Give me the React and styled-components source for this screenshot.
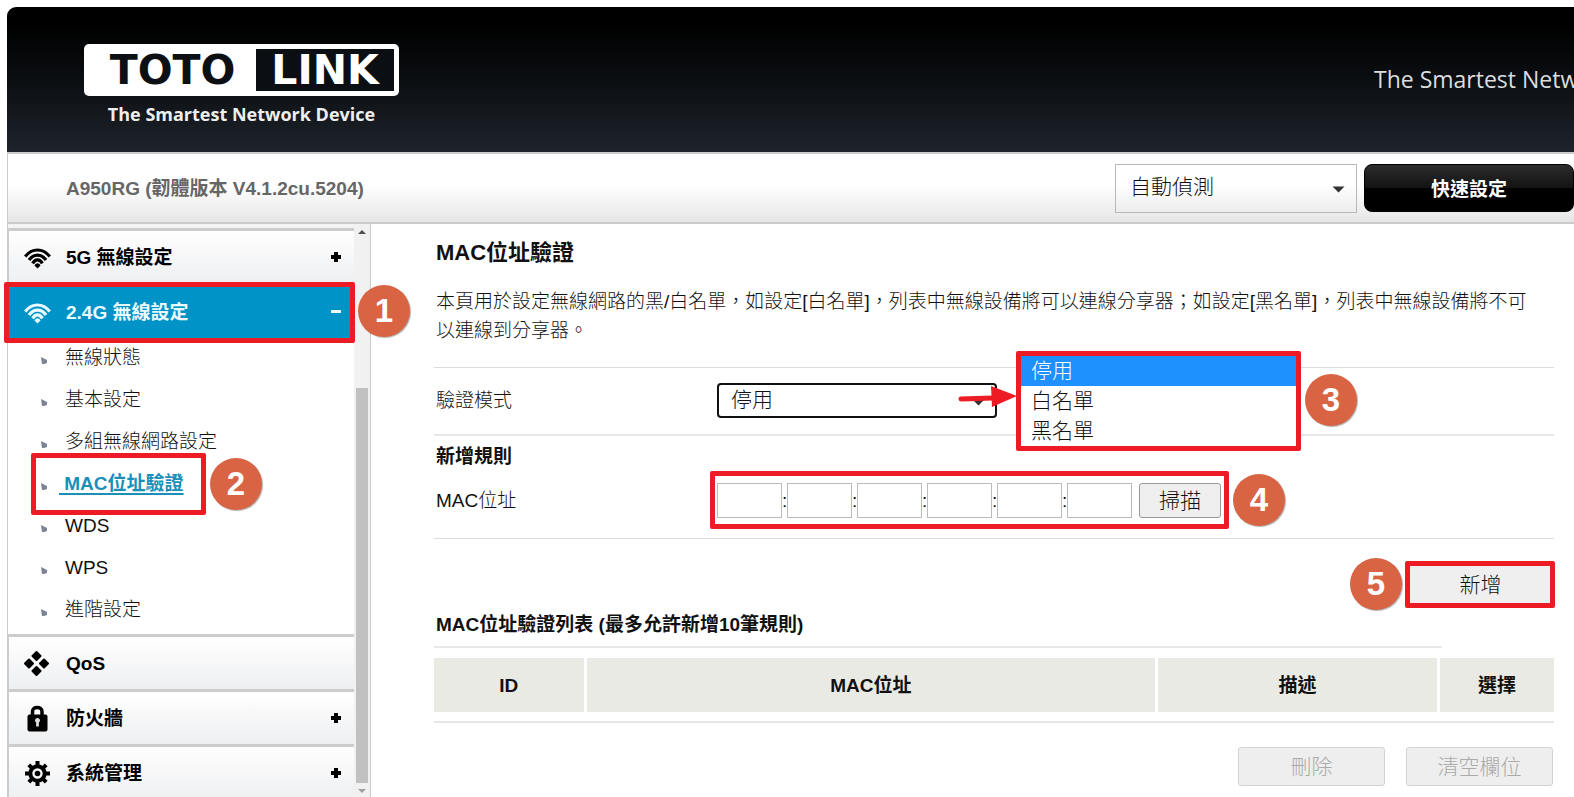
import React from 'react';
import styled, { createGlobalStyle, css } from 'styled-components';

const GlobalStyle = createGlobalStyle`
  * {
    box-sizing: border-box;
  }
  body {
    margin: 0;
    background: #fff;
    color: #111;
    font-family: "Liberation Sans", "Noto Sans CJK TC", sans-serif;
    font-size: 19px;
    font-weight: 300;
    line-height: 29px;
    overflow: hidden;
  }
  button, input, select {
    font-family: inherit;
    font-weight: inherit;
    color: inherit;
  }
`;

const Page = styled.div`
  height: 100vh;
  padding: 7px 0 0 7px;
  display: flex;
  flex-direction: column;
`;

const Header = styled.header`
  height: 145px;
  flex: none;
  display: flex;
  align-items: flex-start;
  justify-content: space-between;
  padding: 37px 0 0 77px;
  border-radius: 9px 0 0 0;
  background: linear-gradient(#000 12%, #0b0e11 50%, #1e242c);
  overflow: hidden;
`;

const Brand = styled.div`
  width: 315px;
  color: #fff;
`;

const Logo = styled.div`
  display: flex;
  height: 52px;
  padding: 5px;
  border-radius: 5px;
  background: #fff;
  font-family: "DejaVu Sans", sans-serif;
  font-size: 41px;
  font-weight: 700;
  line-height: 42px;
  text-align: center;
`;

const LogoLeft = styled.span`
  flex: 1;
  color: #0c0f13;
`;

const LogoRight = styled.span`
  width: 138px;
  background: #0b0e12;
`;

const Tagline = styled.div`
  margin-top: 4px;
  font-family: "Open Sans", "Noto Sans", sans-serif;
  font-size: 18px;
  font-weight: 700;
  text-align: center;
  color: #eee;
`;

const Slogan = styled.div`
  width: 200px;
  margin-top: 21px;
  font-family: "Open Sans", "Noto Sans", sans-serif;
  font-size: 23px;
  font-weight: 400;
  white-space: nowrap;
  color: #ddd;
`;

const TopBar = styled.div`
  height: 72px;
  flex: none;
  display: flex;
  align-items: center;
  gap: 7px;
  padding-left: 58px;
  border: solid #ccc;
  border-width: 2px 0 2px 1px;
  background: linear-gradient(#fff 45%, #e6e6e6);
`;

const Version = styled.div`
  flex: 1;
  font-weight: 700;
  color: #666;
`;

const SelectWrap = styled.div`
  position: relative;
  display: flex;
  width: ${(p) => p.$width};
`;

const Select = styled.select`
  appearance: none;
  width: 100%;
  height: 49px;
  padding: 0 40px 4px 14px;
  border: 1px solid #b8b8b8;
  border-radius: 0;
  outline: none;
  background: transparent;
  font-size: 21px;
  ${(p) => p.$focused && css`
    height: 35px;
    padding: 0 40px 2px 12px;
    border: 2px solid #111;
    border-radius: 4px;
  `}
`;

const Caret = styled.svg`
  position: absolute;
  right: 12px;
  top: 50%;
  width: 13px;
  height: 7px;
  margin-top: -2px;
  pointer-events: none;
`;

const QuickButton = styled.button`
  width: 210px;
  height: 48px;
  padding: 0 0 2px;
  border: 1px solid #000;
  border-radius: 8px;
  background: linear-gradient(#2c2c2c, #131313 50%, #000 50%);
  color: #fff;
  font-size: 19px;
  font-weight: 700;
`;

const Body = styled.div`
  flex: 1;
  min-height: 0;
  display: flex;
`;

const Sidebar = styled.aside`
  width: 364px;
  flex: none;
  display: flex;
  border: solid #ccc;
  border-width: 0 1px;
`;

const Nav = styled.nav`
  flex: 1;
  padding-top: 4px;
  background: #f3f3f3;
`;

const MenuItem = styled.a`
  position: relative;
  display: flex;
  align-items: center;
  gap: 15px;
  height: 55px;
  padding: 0 13px 0 15px;
  border-top: 3px solid #ccc;
  border-left: 1px solid #ccc;
  background: ${(p) => (p.$active ? '#0093c7' : 'linear-gradient(#fff, #eeeff1)')};
  color: ${(p) => (p.$active ? '#e8fbff' : '#000')};
  font-weight: 700;
  text-decoration: none;
`;

const MenuLabel = styled.span`
  flex: 1;
`;

const MenuIcon = styled.svg`
  width: 27px;
  height: 27px;
  flex: none;
`;

const Toggle = styled.svg`
  width: 10px;
  height: 10px;
`;

const SubMenu = styled.ul`
  list-style: none;
  margin: 0;
  padding: 0 0 2px;
  background: #fff;
`;

const SubItem = styled.li`
  position: relative;
  display: flex;
  align-items: center;
  gap: 12px;
  height: 42px;
  padding: 0 0 4px 33px;
`;

const Bullet = styled.svg`
  width: 6px;
  height: 7px;
  margin-top: 6px;
`;

const SubLink = styled.a`
  padding-left: 6px;
  white-space: pre;
  color: ${(p) => (p.$current ? '#1a8fb8' : '#111')};
  font-weight: ${(p) => (p.$current ? 700 : 300)};
  text-decoration: ${(p) => (p.$current ? 'underline' : 'none')};
  text-decoration-thickness: 2px;
  text-underline-offset: 3px;
  ${(p) => p.$current && 'padding-left: 0;'}
`;

const Scrollbar = styled.div`
  width: 16px;
  display: flex;
  flex-direction: column;
  align-items: center;
  justify-content: space-between;
  padding: 6px 0 4px;
  background: #f1f1f1;
`;

const Thumb = styled.div`
  flex: 1;
  width: 12px;
  margin: 154px 0 6px;
  background: #c1c1c1;
`;

const ScrollArrow = styled.svg`
  width: 8px;
  height: 4px;
`;

const Content = styled.main`
  flex: 1;
  min-width: 0;
  padding: 14px 20px 0 63px;
`;

const Title = styled.h1`
  margin: 0 2px;
  font-size: 22px;
  line-height: 30px;
`;

const Description = styled.p`
  margin: 0;
  padding: 19px 18px 22px 2px;
  border-bottom: 1px solid #ddd;
`;

const Row = styled.div`
  display: flex;
  align-items: center;
  padding: ${(p) => p.$padding};
  border-bottom: ${(p) => p.$line || '1px solid #ddd'};
`;

const RowLabel = styled.label`
  flex: 0 0 283px;
  padding-left: 2px;
`;

const SectionTitle = styled.h2`
  margin: 0;
  padding: 6px 2px 0;
  font-size: 19px;
  line-height: 29px;
`;

const ListTitle = styled(SectionTitle)`
  width: 90%;
  padding: 4px 2px 7px;
  border-bottom: 2px solid #e8e8e8;
`;

const MacFields = styled.div`
  position: relative;
  display: flex;
  align-items: center;
`;

const Octet = styled.input`
  width: 65px;
  height: 35px;
  border: 1px solid #bbb;
  text-align: center;
`;

const Colon = styled.span`
  width: 5px;
`;

const Button = styled.button`
  width: ${(p) => p.$width || '147px'};
  height: ${(p) => p.$height || '39px'};
  padding: 0 0 4px;
  border: 1px solid #999;
  border-radius: 3px;
  background: #efefef;
  color: #111;
  font-size: 21px;
  &:disabled {
    border-color: #d4d4d4;
    background: #eee;
    color: #aaa;
  }
`;

const ScanButton = styled(Button)`
  margin-left: 7px;
`;

const Actions = styled.div`
  display: flex;
  justify-content: flex-end;
  gap: 21px;
  padding: ${(p) => p.$padding};
`;

const AddWrap = styled.div`
  position: relative;
  display: flex;
`;

const Table = styled.table`
  width: 100%;
  margin-top: 10px;
  border-collapse: collapse;
  table-layout: fixed;
  th {
    height: 54px;
    padding: 0;
    background: #e9eae4;
  }
  th + th {
    border-left: 3px solid #fff;
  }
`;

const TableEnd = styled.div`
  margin-top: 9px;
  border-bottom: 2px solid #e6e6e6;
`;

// red frame drawn over the parent, $inset is top right bottom left
const Frame = styled.div`
  position: absolute;
  inset: ${(p) => p.$inset};
  z-index: 2;
  border: 5px solid #ed1c24;
  border-radius: 2px;
  pointer-events: none;
`;

const Badge = styled.div`
  position: absolute;
  top: 50%;
  left: calc(100% + 4px);
  z-index: 3;
  width: 52px;
  height: 52px;
  margin-top: -27px;
  border-radius: 50%;
  background: #d96444;
  box-shadow: 1px 1px 1px rgba(0, 0, 0, 0.3);
  color: #fff;
  font-size: 33px;
  font-weight: 700;
  line-height: 52px;
  text-align: center;
`;

const SubBadge = styled(Badge)`
  left: 202px;
`;

const FieldBadge = styled(Badge)`
  left: calc(100% + 12px);
`;

const OptionBadge = styled(Badge)`
  left: calc(100% + 9px);
`;

const AddBadge = styled(Badge)`
  left: auto;
  right: calc(100% + 5px);
`;

const Options = styled.ul`
  position: absolute;
  top: -32px;
  left: 299px;
  z-index: 2;
  width: 285px;
  margin: 0;
  padding: 0;
  list-style: none;
  border: 5px solid #ed1c24;
  border-radius: 2px;
  background: #fff;
  font-size: 21px;
`;

const Option = styled.li`
  height: 30px;
  padding-left: 10px;
  line-height: 29px;
  background: ${(p) => (p.$selected ? '#1e90ff' : '#fff')};
  color: ${(p) => (p.$selected ? '#fff' : '#111')};
`;

const Arrow = styled.svg`
  position: absolute;
  top: 2px;
  left: 240px;
  z-index: 3;
  width: 60px;
  height: 24px;
`;

const WifiIcon = () => (
  <MenuIcon viewBox="0 0 27 27" fill="none" stroke="currentColor" strokeWidth="3.200">
    <path d="M1.200 12.500C8 3.800 19 3.800 25.800 12.500" />
    <path d="M5 16C9.500 9.400 17.500 9.400 22 16" />
    <path d="M8.600 19.400C11.300 14.800 15.700 14.800 18.400 19.400" />
    <path d="M10.500 21.500C12 18.600 15 18.600 16.500 21.500L13.500 24.500Z" fill="currentColor" stroke="none" />
  </MenuIcon>
);

const QosIcon = () => (
  <MenuIcon viewBox="0 0 27 27" fill="currentColor" stroke="currentColor" strokeWidth="2" strokeLinejoin="round">
    <path d="M12.500 2L16.500 6L12.500 10L8.500 6ZM12.500 17L16.500 21L12.500 25L8.500 21ZM5 9.500L9 13.500L5 17.500L1 13.500ZM20 9.500L24 13.500L20 17.500L16 13.500Z" />
  </MenuIcon>
);

const LockIcon = () => (
  <MenuIcon viewBox="0 0 27 27">
    <path d="M8.500 12V6.500C8.500 1.200 18 1.200 18 6.500V12" fill="none" stroke="currentColor" strokeWidth="3.500" />
    <rect x="3.500" y="9.500" width="20" height="17" rx="2" fill="currentColor" />
    <path d="M13.500 13a2.500 2.500 0 0 1 1.400 4.600V21.500h-2.800V17.600a2.500 2.500 0 0 1 1.400-4.600z" fill="#ddd" />
  </MenuIcon>
);

const GearIcon = () => (
  <MenuIcon viewBox="0 0 27 27" stroke="currentColor" fill="none">
    <path
      d="M13.500 1V26M1 13.500H26M4.800 4.800L22.200 22.200M22.200 4.800L4.800 22.200"
      strokeWidth="4"
    />
    <circle cx="13.500" cy="13.500" r="7.200" fill="#f6f7f8" strokeWidth="4" />
    <circle cx="13.500" cy="13.500" r="2.800" fill="currentColor" stroke="none" />
  </MenuIcon>
);

const Plus = () => (
  <Toggle viewBox="0 0 10 10" stroke="currentColor" strokeWidth="4">
    <path d="M5 0V10M0 5H10" />
  </Toggle>
);

const Minus = () => (
  <Toggle viewBox="0 0 10 10" stroke="currentColor" strokeWidth="3">
    <path d="M0 4.500H10" />
  </Toggle>
);

const CaretDown = () => (
  <Caret viewBox="0 0 13 7">
    <path d="M.5 .5H12.500L6.500 6.500Z" fill="#333" />
  </Caret>
);

const subItems = ['無線狀態', '基本設定', '多組無線網路設定', 'MAC位址驗證', 'WDS', 'WPS', '進階設定'];

const SideMenu = () => (
  <Sidebar>
    <Nav>
      <MenuItem href="#wireless-5g">
        <WifiIcon />
        <MenuLabel>5G 無線設定</MenuLabel>
        <Plus />
      </MenuItem>
      <MenuItem href="#wireless-24g" $active>
        <WifiIcon />
        <MenuLabel>2.4G 無線設定</MenuLabel>
        <Minus />
        <Frame $inset="-4px -1px -5px -5px" />
        <Badge>1</Badge>
      </MenuItem>
      <SubMenu>
        {subItems.map((name) => {
          const current = name === 'MAC位址驗證';
          return (
            <SubItem key={name}>
              <Bullet viewBox="0 0 6 7">
                <path d="M0 0L6 3V6L3 7H1Z" fill="#7d8294" />
              </Bullet>
              <SubLink href="#" $current={current}>{current ? ` ${name}` : name}</SubLink>
              {current && <Frame $inset="-11px 148px -9px 23px" />}
              {current && <SubBadge>2</SubBadge>}
            </SubItem>
          );
        })}
      </SubMenu>
      <MenuItem href="#qos">
        <QosIcon />
        <MenuLabel>QoS</MenuLabel>
      </MenuItem>
      <MenuItem href="#firewall">
        <LockIcon />
        <MenuLabel>防火牆</MenuLabel>
        <Plus />
      </MenuItem>
      <MenuItem href="#system">
        <GearIcon />
        <MenuLabel>系統管理</MenuLabel>
        <Plus />
      </MenuItem>
    </Nav>
    <Scrollbar>
      <ScrollArrow viewBox="0 0 8 4"><path d="M0 4L4 0L8 4Z" fill="#505050" /></ScrollArrow>
      <Thumb />
      <ScrollArrow viewBox="0 0 8 4"><path d="M0 0L4 4L8 0Z" fill="#a0a0a0" /></ScrollArrow>
    </Scrollbar>
  </Sidebar>
);

const octets = [1, 2, 3, 4, 5, 6];

const App = () => (
  <Page>
    <GlobalStyle />
    <Header>
      <Brand>
        <Logo>
          <LogoLeft>TOTO</LogoLeft>
          <LogoRight>LINK</LogoRight>
        </Logo>
        <Tagline>The Smartest Network Device</Tagline>
      </Brand>
      <Slogan>The Smartest Network Device</Slogan>
    </Header>
    <TopBar>
      <Version>A950RG (韌體版本 V4.1.2cu.5204)</Version>
      <SelectWrap $width="242px">
        <Select aria-label="語言" defaultValue="auto">
          <option value="auto">自動偵測</option>
        </Select>
        <CaretDown />
      </SelectWrap>
      <QuickButton type="button">快速設定</QuickButton>
    </TopBar>
    <Body>
      <SideMenu />
      <Content>
        <Title>MAC位址驗證</Title>
        <Description>
          本頁用於設定無線網路的黑/白名單，如設定[白名單]，列表中無線設備將可以連線分享器；如設定[黑名單]，列表中無線設備將不可以連線到分享器。
        </Description>
        <Row $padding="15px 0 16px" $line="2px solid #e8e8e8">
          <RowLabel htmlFor="mode">驗證模式</RowLabel>
          <SelectWrap $width="280px">
            <Select id="mode" defaultValue="off" $focused>
              <option value="off">停用</option>
              <option value="allow">白名單</option>
              <option value="deny">黑名單</option>
            </Select>
            <CaretDown />
            <Arrow viewBox="0 0 60 24">
              <path d="M4 14L36 13" stroke="#ed1c24" strokeWidth="5" strokeLinecap="round" />
              <path d="M34 1L60 11L35 22Z" fill="#ed1c24" />
            </Arrow>
            <Options>
              <Option $selected>停用</Option>
              <Option>白名單</Option>
              <Option>黑名單</Option>
              <OptionBadge as="li">3</OptionBadge>
            </Options>
          </SelectWrap>
        </Row>
        <SectionTitle>新增規則</SectionTitle>
        <Row $padding="12px 0 20px">
          <RowLabel htmlFor="mac-1">MAC位址</RowLabel>
          <MacFields>
            {octets.map((n) => (
              <React.Fragment key={n}>
                {n > 1 && <Colon>:</Colon>}
                <Octet id={`mac-${n}`} aria-label={`MAC位址 ${n}`} maxLength={2} />
              </React.Fragment>
            ))}
            <ScanButton type="button" $width="82px" $height="35px">掃描</ScanButton>
            <Frame $inset="-12px -8px -11px -7px" />
            <FieldBadge>4</FieldBadge>
          </MacFields>
        </Row>
        <Actions $padding="24px 0 0">
          <AddWrap>
            <Button type="button" $height="43px">新增</Button>
            <Frame $inset="-2px -1px -2px -2px" />
            <AddBadge>5</AddBadge>
          </AddWrap>
        </Actions>
        <ListTitle>MAC位址驗證列表 (最多允許新增10筆規則)</ListTitle>
        <Table>
          <colgroup>
            <col width="13.500%" />
            <col width="51%" />
            <col width="25.200%" />
            <col />
          </colgroup>
          <thead>
            <tr>
              <th>ID</th>
              <th>MAC位址</th>
              <th>描述</th>
              <th>選擇</th>
            </tr>
          </thead>
        </Table>
        <TableEnd />
        <Actions $padding="24px 1px 0 0">
          <Button type="button" disabled>刪除</Button>
          <Button type="button" disabled>清空欄位</Button>
        </Actions>
      </Content>
    </Body>
  </Page>
);

export default App;
